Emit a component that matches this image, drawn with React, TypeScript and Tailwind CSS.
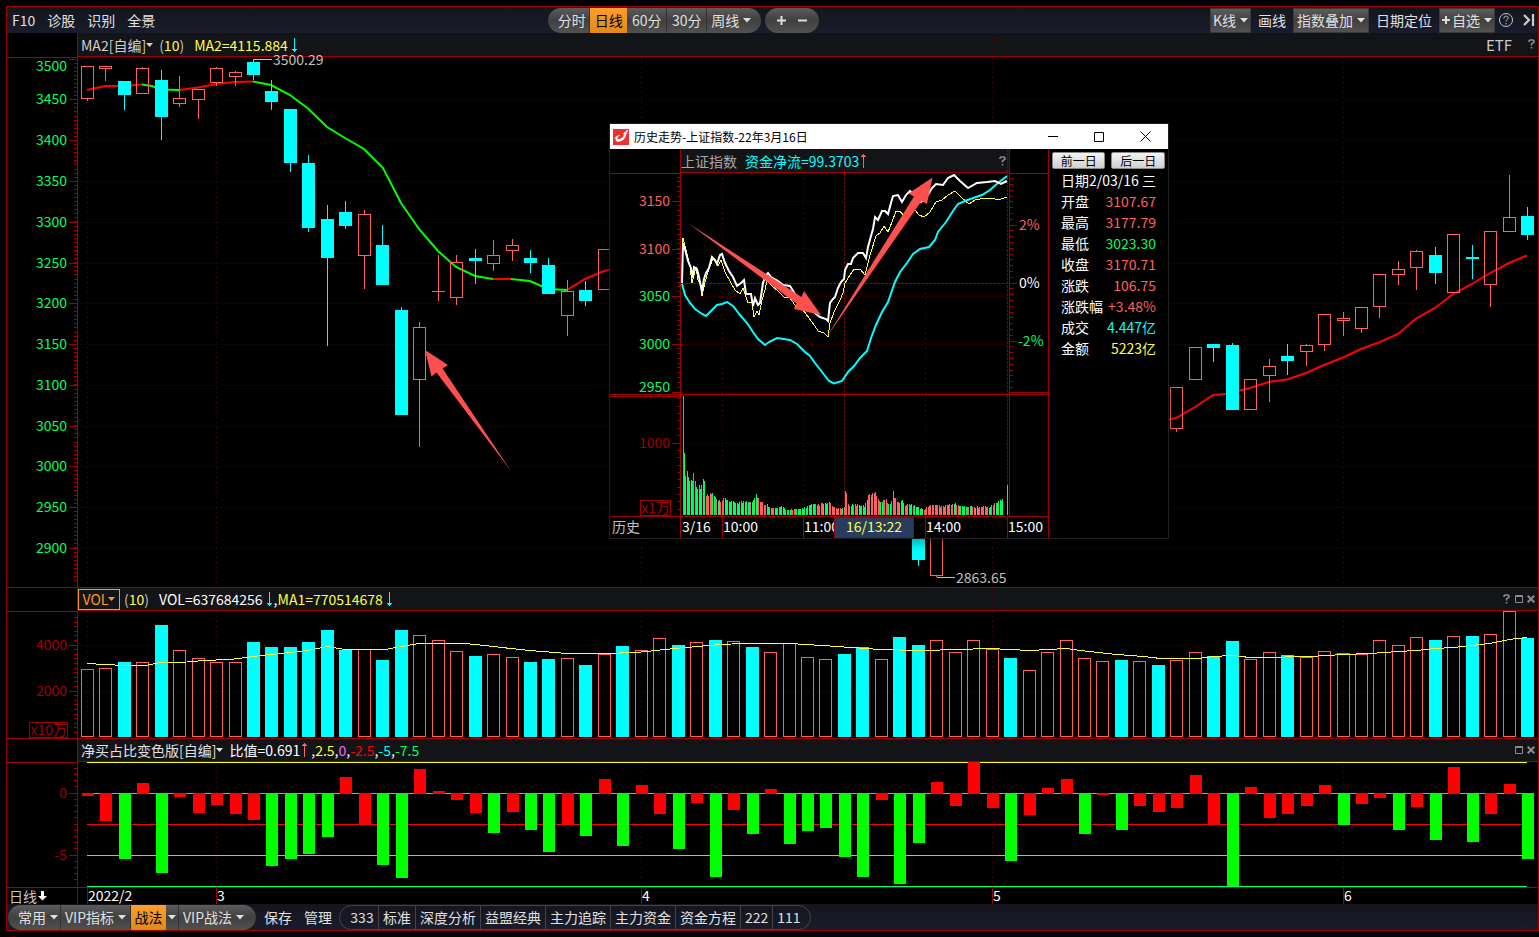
import React from 'react';

const RED = '#a00000';
const UP = '#ff6060';
const DOWN = '#00ffff';
const FONT = `font-['Noto_Sans_CJK_SC','Noto_Sans',sans-serif]`;

// plot area shared by all stacked panels
const PLOT_X = 78;
const PLOT_W = 1460;
const MONTHS = [
  { x: 87, label: '2022/2' },
  { x: 216, label: '3' },
  { x: 641, label: '4' },
  { x: 992, label: '5' },
  { x: 1343, label: '6' },
];

const barX = (i: number) => Math.floor(87.3 + i * 18.4667);
const pct = (x: number) => `${((x - PLOT_X) / PLOT_W) * 100}%`;

// index, kind, high, body top, body bottom, low
type Candle = [number, 'u' | 'd', number, number, number, number];
const CANDLES: Candle[] = [
  [0, 'u', 66, 66, 98, 101], [1, 'u', 66, 66, 68, 81], [2, 'd', 81, 81, 95, 110], [3, 'u', 67, 68, 93, 93],
  [4, 'd', 70, 80, 117, 140], [5, 'u', 76, 98, 103, 107], [6, 'u', 89, 89, 99, 119], [7, 'u', 67, 68, 82, 86],
  [8, 'u', 71, 72, 76, 86], [9, 'd', 59, 62, 75, 80], [10, 'd', 80, 91, 102, 110], [11, 'd', 109, 109, 163, 172],
  [12, 'd', 155, 163, 228, 232], [13, 'd', 205, 219, 258, 346], [14, 'd', 201, 212, 226, 229], [15, 'u', 210, 214, 255, 289],
  [16, 'd', 225, 245, 285, 285], [17, 'd', 307, 310, 415, 415], [18, 'u', 322, 327, 379, 447], [19, 'u', 255, 291, 291, 301],
  [20, 'u', 255, 262, 297, 305], [21, 'd', 249, 258, 261, 284], [22, 'u', 240, 255, 263, 271], [23, 'u', 239, 245, 250, 261],
  [24, 'd', 250, 258, 263, 273], [25, 'd', 258, 265, 294, 294], [26, 'u', 280, 291, 315, 336], [27, 'd', 281, 290, 301, 306],
  [28, 'u', 249, 249, 289, 289], [45, 'd', 500, 500, 560, 566], [46, 'u', 510, 510, 575, 577],
  [59, 'u', 387, 387, 428, 432], [60, 'u', 347, 347, 379, 379], [61, 'd', 344, 344, 348, 362], [62, 'd', 343, 345, 410, 410],
  [63, 'u', 379, 379, 409, 409], [64, 'u', 359, 366, 375, 402], [65, 'd', 344, 356, 361, 375], [66, 'u', 344, 345, 351, 366],
  [67, 'u', 314, 314, 344, 351], [68, 'u', 312, 318, 320, 336], [69, 'u', 307, 307, 328, 333], [70, 'u', 274, 274, 306, 318],
  [71, 'u', 261, 269, 274, 285], [72, 'u', 250, 251, 267, 290], [73, 'd', 247, 255, 273, 284], [74, 'u', 234, 234, 292, 292],
  [75, 'd', 245, 257, 259, 279], [76, 'u', 231, 231, 284, 307], [77, 'u', 175, 217, 231, 231], [78, 'd', 207, 216, 235, 240],
];

const MA_LINES = [
  { color: '#ff0000', points: '87,90 105,86 124,86 142,84.5' },
  { color: '#00ff00', points: '142,84.5 152,86 161,89.5 179,90' },
  { color: '#ff0000', points: '179,90 198,87.5 216,84 235,82 253,81.5' },
  { color: '#00ff00', points: '253,81.5 271,85 290,95 308,108.5 327,127 345,138 364,149 383,168 401,203 419,229 438,251 456,267 475,276 493,279' },
  { color: '#ff0000', points: '493,279 511,279' },
  { color: '#00ff00', points: '511,279 530,281 548,289 567,290' },
  { color: '#ff0000', points: '567,290 585,279 604,271 610,270' },
  { color: '#ff0000', points: '1166,420 1176,418 1195,407 1213,395 1226,394 1250,388 1269,382 1287,379.5 1306,373 1324,365 1343,357.5 1361,349 1380,342 1398,334 1416,318.5 1435,308 1453,294 1472,284 1490,273 1509,263 1527,255.5' },
];

const VOLUMES =
  'u669 u668 d662 u662 d625 u650 u658 u662 u662 d642 d647 d647 d642 d630 d650 u649 d660 d630 u635 u640 u651 d656 u654 u657 ' +
  'd662 d659 u658 d665 u654 d646 u650 u638 d645 u642 d640 u641 d647 u652 u643 u657 u659 d654 d647 u659 d637 d645 u640 u652 ' +
  'u640 u649 d658 u670 u652 u640 u658 u661 d660 u661 d665 u660 u652 d656 d641 u659 u652 d655 u657 u651 u653 u654 u640 u645 ' +
  'u637 d640 u636 d636 u634 u611 d638';

const VOL_MA =
  '87,663.5 105,664.5 124,665.5 145,665.5 161,662.5 187,662 198,661 216,660 234,659 253,656.5 271,654.5 290,652.5 308,650.5 327,646.5 345,649.5 ' +
  '385,649.5 401,646.5 419,643.5 465,643.5 475,644.5 493,646.5 511,648.5 530,650.5 567,653.5 600,654 641,652 680,648 715,645 740,643.5 790,643.5 ' +
  '830,646 880,649.5 900,650 940,650 990,648.5 1030,650.5 1066,648.5 1080,650.5 1098,652.5 1117,654.5 1143,656.5 1161,658.5 1198,658.5 ' +
  '1213,656.5 1232,655.5 1250,657.5 1280,657.5 1290,656.5 1310,656.5 1343,654.5 1370,653.5 1398,651.5 1416,650.5 1435,648.5 1453,647.5 ' +
  '1472,645.5 1490,643.5 1509,639.5 1527,637.5';

const RATIOS =
  'r796 r821 g859 r783 g873 r797 r813 r805 r814 r820 g866 g859 g854 g837 r777 r824 g865 g878 r769 r791 r800 r813 g833 r812 ' +
  'g830 g852 r824 g836 r779 g846 r785 r814 g849 r803 g877 r810 g834 r789 g844 g831 g828 g857 g877 r800 g884 g843 r782 r806 ' +
  'r762 r808 g861 r815 r788 r779 g834 r795 g830 r806 r812 r808 r775 r824 g886 r787 r818 r814 r806 r785 g825 r804 r798 g830 ' +
  'r807 g840 r767 g842 r814 r784 g859';

const parse = (s: string) => s.split(' ').map((v) => ({ kind: v[0], y: Number(v.slice(1)) }));

const WHITE_LINE =
  '682,283 683,243 685,249 688,261 691,268 693,278 694,267 697,269 699,277 702,292 704,279 706,273 709,268 712,257 715,260 717,264 720,255 722,254 725,263 729,271 733,277 737,286 741,283 744,280 746,294 751,294 753,306 755,298 758,305 760,303 763,283 766,275 768,273 771,277 778,281 783,285 790,286 795,294 800,299 810,308 816,314 820,317 826,319 828,321 830,303 833,299 835,297 838,288 841,282 844,279 845,270 848,264 851,264 853,258 858,253 863,253 866,258 868,247 871,236 873,229 875,217 878,220 882,211 885,211 888,214 891,203 893,196 898,195 902,202 906,195 910,191 916,197 921,202 928,195 932,188 936,184 943,185 948,178 954,175 960,181 968,188 977,183 987,182 995,181 1001,184 1007,181';
const YELLOW_LINE =
  '682,283 683,238 686,250 690,266 692,283 696,267 698,280 701,285 702,296 705,282 708,272 713,258 718,266 721,260 725,272 730,281 735,290 740,294 743,288 748,303 752,302 754,317 757,311 759,315 762,300 765,290 767,281 772,286 778,291 784,297 790,298 797,308 803,310 809,318 815,326 818,331 824,333 828,337 830,323 834,312 840,300 843,293 845,283 850,275 854,269 860,269 865,275 870,255 876,236 880,233 884,226 888,232 892,222 896,211 900,211 906,219 910,208 915,210 919,215 924,217 930,212 936,202 942,200 948,195 955,191 962,198 969,204 975,200 985,198 995,199 1001,199 1007,197';
const CYAN_LINE =
  '682,284 685,295 690,303 695,309 702,314 706,316 712,310 717,305 722,304 727,302 733,306 740,315 747,323 753,332 758,339 765,345 769,342 777,338 790,340 797,344 805,352 810,356 815,363 822,372 829,381 834,383.5 842,381 848,372 854,366 860,358 867,351 871,338 876,325 882,312 888,302 895,282 900,272 907,263 913,254 920,249 929,247 935,240 938,232 946,222 953,211 958,204 965,201 973,198 982,195 990,190 998,183 1007,176';

// minute volume: envelope points (x, height) with the share of rising bars
const VOL_ENV: [number, number, number][] = [
  [684, 55, 0], [685, 43, 0], [687, 42, 0.2], [690, 30, 0.2], [693, 39, 0.5], [698, 25, 0.2], [703, 36, 0.4], [706, 19, 0.9], [712, 21, 0.7],
  [716, 15, 0.2], [720, 12, 0.7], [725, 16, 0.1], [731, 12, 0.2], [745, 13, 0.4], [752, 14, 0.2], [756, 20, 0.8], [760, 12, 1],
  [767, 10, 0.8], [773, 6, 0.3], [782, 8, 0.3], [786, 5, 0.5], [800, 6, 0.3], [812, 10, 0.4], [820, 10, 0.4], [829, 12, 0.8],
  [835, 6, 0.8], [844, 7, 1], [845, 25, 1], [848, 10, 0.8], [858, 10, 0.3], [864, 8, 0.2], [868, 18, 0.9], [875, 24, 0.9], [878, 14, 0.8],
  [885, 15, 0.8], [890, 10, 0.4], [893, 21, 0.9], [897, 12, 0.6], [901, 14, 0.3], [905, 10, 0.6], [914, 10, 0.2], [920, 6, 0.2],
  [925, 6, 1], [934, 12, 0.9], [940, 8, 1], [953, 11, 0.5], [965, 8, 0.2], [980, 8, 0.8], [990, 8, 0.7], [996, 12, 0.5], [1003, 15, 0.8],
];

const minuteBars = () => {
  const bars: { x: number; h: number; up: boolean }[] = [{ x: 683, h: 119, up: true }];
  for (let i = 1; i < 237; i++) {
    const x = Math.floor(683 + i * 1.355);
    if (x > 1003) break;
    let k = 0;
    while (k < VOL_ENV.length - 2 && VOL_ENV[k + 1][0] <= x) k++;
    const [x0, h0, p] = VOL_ENV[k];
    const [x1, h1] = VOL_ENV[k + 1];
    const h = h0 + ((h1 - h0) * Math.max(0, x - x0)) / (x1 - x0);
    const noise = Math.abs(Math.sin(i * 12.9898) * 43758.5453) % 1;
    const tone = Math.abs(Math.sin(Math.floor(i / 2) * 78.233) * 12543.123) % 1;
    bars.push({ x, h: Math.round(h * (0.9 + noise * 0.25)), up: tone < p });
  }
  bars.push({ x: 1007, h: 30, up: false });
  return bars;
};

interface Tick {
  y: number;
  label: string;
  color?: string;
  labelY?: number;
}

interface AxisProps {
  top: number;
  height: number;
  ticks: Tick[];
  step: number;
  from: number;
  to: number;
  rule: number;
  unit?: { text: string; x: number; y: number };
}

const Axis = ({ top, height, ticks, step, from, to, rule, unit }: AxisProps) => {
  const minors: number[] = [];
  const base = ticks[0].y;
  for (let y = base + Math.ceil((from - base) / step) * step; y <= to; y += step) minors.push(Math.floor(y) + 0.5);
  return (
    <div className="w-[71px] shrink-0 border-r border-[#a00000]">
      <svg width="70" height={height} viewBox={`0 ${top} 70 ${height}`} className="block overflow-visible" fontSize="14">
        <line x1="0" x2="70" y1={rule + 0.5} y2={rule + 0.5} stroke={RED} />
        {minors.map((y) => (
          <line key={y} x1="67" x2="70" y1={y} y2={y} stroke={RED} />
        ))}
        {ticks.map((t) => (
          <g key={t.y}>
            <line x1="62" x2="70" y1={t.y + 0.5} y2={t.y + 0.5} stroke={RED} />
            <text x="60" y={(t.labelY ?? t.y) + 5} textAnchor="end" fill={t.color ?? RED}>
              {t.label}
            </text>
          </g>
        ))}
        {unit && (
          <g>
            <rect x={unit.x + 0.5} y={unit.y + 0.5} width={60 - unit.x} height="15" fill="none" stroke={RED} />
            <text x="60" y={unit.y + 13} textAnchor="end" fill={RED}>
              {unit.text}
            </text>
          </g>
        )}
      </svg>
    </div>
  );
};

const MonthLines = ({ top, height }: { top: number; height: number }) => (
  <g stroke="#600000" strokeDasharray="1 4">
    {MONTHS.map((m) => (
      <line key={m.x} x1={m.x + 0.5} x2={m.x + 0.5} y1={top} y2={top + height} />
    ))}
  </g>
);

const Plot = ({ top, height, rows, children }: { top: number; height: number; rows: number[]; children: React.ReactNode }) => (
  <svg
    className="block w-full"
    height={height}
    viewBox={`${PLOT_X} ${top} ${PLOT_W} ${height}`}
    preserveAspectRatio="none"
    shapeRendering="crispEdges"
  >
    <g stroke="#600000" strokeDasharray="1 3">
      {rows.map((y) => (
        <line key={y} x1="81" x2="1538" y1={y + 0.5} y2={y + 0.5} />
      ))}
    </g>
    <MonthLines top={top} height={height} />
    {children}
  </svg>
);

const PanelHeader = ({ className, children }: { className: string; children: React.ReactNode }) => (
  <div className={`relative flex items-center border-b border-[#a00000] bg-[#131418] ${className}`}>
    <svg className="absolute inset-0 h-full w-full" viewBox={`${PLOT_X} 0 ${PLOT_W} 23`} preserveAspectRatio="none" shapeRendering="crispEdges">
      <MonthLines top={0} height={23} />
    </svg>
    {children}
  </div>
);

const Caret = ({ className = 'text-[#e0e0e0]' }: { className?: string }) => (
  <svg width="8" height="5" viewBox="0 0 8 5" className={`shrink-0 ${className}`}>
    <path d="M0 0h8L4 4.5z" fill="currentColor" />
  </svg>
);

const SmallCaret = () => (
  <svg width="7" height="4" viewBox="0 0 7 4" className="shrink-0">
    <path d="M0 0h7L3.5 4z" fill="currentColor" />
  </svg>
);

const Trend = ({ up = false }: { up?: boolean }) => (
  <svg width="5" height="14" viewBox="0 0 5 14" shapeRendering="crispEdges" className={`shrink-0 ${up ? 'rotate-180 text-[#ff6060]' : 'text-[#00ffff]'}`}>
    <path d="M2 0h1v14H2zM0 11h5v1H0zM1 12h3v1H1z" fill="currentColor" />
  </svg>
);

const HelpMark = () => (
  <svg width="8" height="10" viewBox="0 0 8 10">
    <path d="M1 3V2l1-1h3l1 1v1L3.5 5v1.500M3.500 8v1.500" fill="none" stroke="#8c8c8c" strokeWidth="1.600" />
  </svg>
);

const MaxMark = () => (
  <svg width="8" height="8" viewBox="0 0 8 8">
    <path d="M.5.5h7v7h-7zM0 1.500h8" fill="none" stroke="#8c8c8c" />
  </svg>
);

const CloseMark = () => (
  <svg width="8" height="8" viewBox="0 0 8 8">
    <path d="M.7.7l6.600 6.600M7.300.7L.7 7.300" stroke="#8c8c8c" strokeWidth="2" />
  </svg>
);

const METAL = 'bg-gradient-to-b from-[#5c5c5c] via-[#404040] to-[#525252]';
const METAL_BTN = `flex h-[25px] items-center border border-[#3a3a3a] ${METAL}`;

const TopBar = () => (
  <header className="grid h-[26px] grid-cols-[541fr_989fr] items-center bg-gradient-to-b from-[#14151d] to-[#191c2c]">
    <nav className="flex gap-3 pl-[5px]">
      <button>F10</button>
      <button>诊股</button>
      <button>识别</button>
      <button>全景</button>
    </nav>
    <div className="flex items-center justify-between">
      <div className="flex gap-1">
        <div className={`flex h-[25px] overflow-hidden rounded-full ${METAL}`}>
          <button className="w-[42px] border-r border-[#333] pl-1.5">分时</button>
          <button className="w-[37px] bg-gradient-to-b from-[#ff9d2e] to-[#e08a14] text-black">日线</button>
          <button className="w-10 border-r border-[#333]">60分</button>
          <button className="w-10 border-r border-[#333]">30分</button>
          <button className="flex w-[54px] items-center gap-1 pl-1">
            周线
            <Caret />
          </button>
        </div>
        <div className={`flex h-[25px] items-center justify-center gap-3 rounded-full px-3 ${METAL}`}>
          <button aria-label="放大">
            <svg width="9" height="9" viewBox="0 0 9 9"><path d="M4.500 0v9M0 4.500h9" stroke="#ddd" strokeWidth="2" /></svg>
          </button>
          <button aria-label="缩小">
            <svg width="9" height="9" viewBox="0 0 9 9"><path d="M0 4.500h9" stroke="#ddd" strokeWidth="2" /></svg>
          </button>
        </div>
      </div>
      <div className="flex items-center gap-[7px]">
        <button className={`gap-1 px-0.5 ${METAL_BTN}`}>
          K线
          <Caret />
        </button>
        <button>画线</button>
        <button className={`gap-1 px-[3px] ${METAL_BTN}`}>
          指数叠加
          <Caret />
        </button>
        <button>日期定位</button>
        <button className={`gap-1 px-0.5 ${METAL_BTN}`}>
          <span className="flex items-center gap-0.5">
            <svg width="8" height="8" viewBox="0 0 8 8"><path d="M4 0v8M0 4h8" stroke="#ddd" strokeWidth="2" /></svg>
            自选
          </span>
          <Caret />
        </button>
        <div className="flex items-center gap-2 pr-0.5">
          <button aria-label="帮助" className="-ml-1">
            <svg width="16" height="16" viewBox="0 0 16 16" fill="none" stroke="#c8c8c8">
              <circle cx="8" cy="8" r="6.500" />
              <path d="M5.800 6.500c0-3 4.400-3 4.400-.4 0 1.600-2.200 1.600-2.200 3.400M8 11v1.300" />
            </svg>
          </button>
          <button aria-label="收起">
            <svg width="14" height="12" viewBox="0 0 14 12" fill="none" stroke="#ccc" strokeWidth="2.200">
              <path d="M2 1l5 5-5 5M11 0v12" />
            </svg>
          </button>
        </div>
      </div>
    </div>
  </header>
);

const PRICE_ROWS = [59, 99, 140, 181, 222, 263, 303, 344, 385, 426, 466, 507, 548];

const PricePanel = () => (
  <section className="flex border-b border-[#a00000]">
    <Axis
      top={33}
      height={554}
      rule={57}
      step={4.075}
      from={60}
      to={584}
      ticks={PRICE_ROWS.map((y, i) => ({ y, label: String(3500 - i * 50), color: '#00ff60', labelY: i === 0 ? 66 : y }))}
    />
    <div className="min-w-0 flex-1">
      <PanelHeader className="h-6 justify-between pl-[3px]">
        <div className="relative flex items-center text-[#ffff40]">
          <button className="flex items-center text-[#d0d0d0]">
            MA2[自编]
            <SmallCaret />
          </button>
          <span className="ml-1.5"><span className="text-[#c0c0c0]">(</span>10<span className="text-[#c0c0c0]">)</span></span>
          <span className="mr-1 ml-2.5">MA2=4115.884</span>
          <Trend />
        </div>
        <div className="relative flex items-center gap-4 pr-0.5 text-[15px] text-[#c8c8c8]">
          ETF
          <HelpMark />
        </div>
      </PanelHeader>
      <div className="relative">
        <Plot top={57} height={530} rows={PRICE_ROWS}>
          {MA_LINES.map((l) => (
            <polyline key={l.points} points={l.points} fill="none" stroke={l.color} strokeWidth="2" shapeRendering="auto" />
          ))}
          {CANDLES.map(([i, kind, high, top, bottom, low]) => {
            const x = barX(i);
            return kind === 'd' ? (
              <g key={i} fill={DOWN}>
                <rect x={x} y={high} width="1" height={low - high} />
                <rect x={x - 6} y={top} width="13" height={bottom - top} />
              </g>
            ) : top === bottom ? (
              <g key={i} fill={UP}>
                <rect x={x} y={high} width="1" height={low - high} />
                <rect x={x - 6} y={top} width="13" height="1" />
              </g>
            ) : (
              <g key={i} fill={UP}>
                <rect x={x} y={high} width="1" height={top - high} />
                <rect x={x} y={bottom} width="1" height={low - bottom} />
                <rect x={x - 5.5} y={top + 0.5} width="12" height={bottom - top} fill="none" stroke={UP} />
              </g>
            );
          })}
          <path d="M253.500 59.500H272M936.500 577.500H955" stroke="#c0c0c0" />
          <path d="M425 350L448 365 442.500 368.500 511 471 436.500 372.500 431.500 376.500z" fill="#ff5050" shapeRendering="auto" />
        </Plot>
        <span className="absolute -top-2 leading-5 text-[#c0c0c0]" style={{ left: pct(273) }}>3500.29</span>
        <span className="absolute bottom-0 leading-5 text-[#c0c0c0]" style={{ left: pct(956) }}>2863.65</span>
      </div>
    </div>
  </section>
);

const VolumePanel = () => (
  <section className="flex border-b border-[#a00000]">
    <Axis
      top={588}
      height={150}
      rule={611}
      step={4.6}
      from={613}
      to={735}
      ticks={[{ y: 645, label: '4000' }, { y: 691, label: '2000' }]}
      unit={{ text: 'x10万', x: 22, y: 722 }}
    />
    <div className="min-w-0 flex-1">
      <PanelHeader className="h-[23px] justify-between">
        <div className="relative flex items-center text-[#ffff40]">
          <button className="flex h-[21px] w-[42px] items-center justify-center border border-[#ff9a20] text-[#ff9a20]">
            VOL
            <SmallCaret />
          </button>
          <span className="ml-1"><span className="text-[#c0c0c0]">(</span>10<span className="text-[#c0c0c0]">)</span></span>
          <span className="mr-1 ml-2.5 text-white">VOL=637684256</span>
          <Trend />
          <span className="ml-0.5 text-white">,</span>
          <span className="mr-1">MA1=770514678</span>
          <Trend />
        </div>
        <div className="relative flex items-center gap-1 pr-[3px]">
          <HelpMark />
          <MaxMark />
          <CloseMark />
        </div>
      </PanelHeader>
      <Plot top={611} height={127} rows={[645, 691]}>
        {parse(VOLUMES).map(({ kind, y }, i) =>
          kind === 'd' ? (
            <rect key={i} x={barX(i) - 6} y={y} width="13" height={737 - y} fill={DOWN} />
          ) : (
            <rect key={i} x={barX(i) - 5.5} y={y + 0.5} width="12" height={736 - y} fill="none" stroke={UP} />
          )
        )}
        <polyline points={VOL_MA} fill="none" stroke="#ffff40" />
      </Plot>
    </div>
  </section>
);

const RatioPanel = () => (
  <section className="flex border-b border-[#a00000]">
    <Axis top={739} height={148} rule={762} step={6.2} from={764} to={884} ticks={[{ y: 793, label: '0' }, { y: 855, label: '-5' }]} />
    <div className="min-w-0 flex-1">
      <PanelHeader className="h-[23px] justify-between pl-[3px]">
        <div className="relative flex items-center text-white">
          <button className="flex items-center text-[#e0e0e0]">
            净买占比变色版[自编]
            <SmallCaret />
          </button>
          <span className="mr-0.5 ml-1.5">比值=0.691</span>
          <Trend up />
          <span className="ml-1">
            ,<span className="text-[#ffff40]">2.5</span>,<span className="text-[#ff60ff]">0</span>,
            <span className="text-[#ff0000]">-2.5</span>,<span className="text-[#00ffff]">-5</span>,
            <span className="text-[#00ff60]">-7.5</span>
          </span>
        </div>
        <div className="relative flex items-center gap-1 pr-[3px]">
          <MaxMark />
          <CloseMark />
        </div>
      </PanelHeader>
      <Plot top={762} height={125} rows={[793, 855]}>
        <line x1="87" x2="1527" y1="762.5" y2="762.5" stroke="#ffff00" />
        <line x1="87" x2="1527" y1="793.5" y2="793.5" stroke="#ff60ff" />
        <line x1="87" x2="1527" y1="824.5" y2="824.5" stroke="#ff0000" />
        <line x1="87" x2="1527" y1="855.5" y2="855.5" stroke="#00ffff" />
        <line x1="87" x2="1527" y1="886.5" y2="886.5" stroke="#00ff60" />
        {parse(RATIOS).map(({ kind, y }, i) => (
          <rect
            key={i}
            x={barX(i) - 5}
            y={Math.min(y, 793)}
            width="12"
            height={y < 793 ? 794 - y : y - 793}
            fill={kind === 'g' ? '#00ff00' : '#ff0000'}
          />
        ))}
      </Plot>
    </div>
  </section>
);

const DateRuler = () => (
  <div className="flex h-4 leading-4">
    <button className="flex w-[71px] shrink-0 items-center gap-px border-r border-[#a00000] pl-0.5 text-[#c8c8c8]">
      日线
      <svg width="9" height="10" viewBox="0 0 9 10"><path d="M3 0h3v5h3L4.500 9.500 0 5h3z" fill="#fff" /></svg>
    </button>
    <div className="relative flex-1 text-white">
      {MONTHS.map((m) => (
        <span key={m.x} className="absolute h-4 border-l border-[#a00000] leading-[14px]" style={{ left: pct(m.x) }}>
          {m.label}
        </span>
      ))}
    </div>
  </div>
);

const SCHEMES = ['标准', '深度分析', '益盟经典', '主力追踪', '主力资金', '资金方程', '222'];

const BottomBar = () => (
  <footer className="flex h-[26px] items-center bg-gradient-to-b from-[#14151d] to-[#191c2c] pl-px">
    <div className={`flex h-[25px] overflow-hidden rounded-full ${METAL}`}>
      <button className="flex w-[53px] items-center gap-1 border-r border-[#333] pl-2.5">
        常用
        <Caret />
      </button>
      <button className="flex w-[70px] items-center gap-1 border-r border-[#333] pl-1">
        VIP指标
        <Caret />
      </button>
      <button className="w-[35px] bg-gradient-to-b from-[#ff9d2e] to-[#e08a14] text-black">战法</button>
      <button aria-label="战法菜单" className="flex w-[13px] items-center justify-center border-r border-[#333]">
        <Caret />
      </button>
      <button className="flex w-[77px] items-center gap-1 pl-1">
        VIP战法
        <Caret />
      </button>
    </div>
    <div className="flex gap-3 pr-[7px] pl-2">
      <button>保存</button>
      <button>管理</button>
    </div>
    <div className="flex h-[25px] items-center rounded-full border border-[#444]">
      <button className="h-full w-[38px] pl-1.5">333</button>
      {SCHEMES.map((s) => (
        <button key={s} className="h-full border-l border-[#444] px-1">
          {s}
        </button>
      ))}
      <button className="h-full w-[38px] border-l border-[#444] pr-1.5">111</button>
    </div>
  </footer>
);

const QUOTE = [
  { name: '日期', value: '2/03/16 三', color: 'text-white' },
  { name: '开盘', value: '3107.67', color: 'text-[#ff6060]' },
  { name: '最高', value: '3177.79', color: 'text-[#ff6060]' },
  { name: '最低', value: '3023.30', color: 'text-[#00ff60]' },
  { name: '收盘', value: '3170.71', color: 'text-[#ff6060]' },
  { name: '涨跌', value: '106.75', color: 'text-[#ff6060]' },
  { name: '涨跌幅', value: '+3.48%', color: 'text-[#ff6060]' },
  { name: '成交', value: '4.447亿', color: 'text-[#00ffff]' },
  { name: '金额', value: '5223亿', color: 'text-[#ffff40]' },
];

// dotted hour lines plus the dashed cursor and close lines
const HourLines = ({ y1, y2 }: { y1: number; y2: number }) => (
  <>
    <g stroke="#600000" strokeDasharray="1 4">
      {[722, 803, 925].map((x) => (
        <line key={x} x1={x + 0.5} x2={x + 0.5} y1={y1} y2={y2} />
      ))}
    </g>
    <g stroke="#800000" strokeDasharray="3 1">
      <line x1="844.5" x2="844.5" y1={y1} y2={y2} />
      <line x1="1007.5" x2="1007.5" y1={y1} y2={y2} />
    </g>
  </>
);

const HistoryWindow = () => {
  const pctTicks = Array.from({ length: 38 }, (_, i) => Math.floor(283 + (i - 18) * 5.8)).filter((y) => y > 175 && y < 391);
  return (
    <div role="dialog" aria-label="历史走势" className="absolute top-[123px] left-[609px] w-[560px] border border-[#202020] bg-black shadow-[0_4px_10px_rgba(0,0,0,0.35)]">
      <div className="flex h-[25px] items-center bg-white pl-[3px] text-xs leading-none text-black">
        <svg width="16" height="16" viewBox="0 0 16 16">
          <rect width="16" height="16" fill="#f03030" />
          <path d="M1 10C2 7.500 4.500 6 7.500 6.200 5.500 7 4 8.500 4.500 9.800 8 10.500 10.500 8 11.200 5L9.500 5.200 12.500 2.500 15 4.800 13.500 4.600C13 9 9.500 13 5 12.800 2.800 12.600 2 11 3 9.300 2.300 9.200 1.600 9.400 1 10z" fill="#fff" />
          <circle cx="14" cy="2" r="1" fill="#fff" />
        </svg>
        <h2 className="ml-[5px] flex-1">历史走势-上证指数-22年3月16日</h2>
        <button aria-label="最小化" className="flex w-[46px] justify-center">
          <svg width="10" height="11" viewBox="0 0 10 11"><path d="M0 5.500h10" stroke="#000" /></svg>
        </button>
        <button aria-label="最大化" className="flex w-[46px] justify-center">
          <svg width="10" height="10" viewBox="0 0 10 10"><path d="M.5.5h9v9h-9z" fill="none" stroke="#000" /></svg>
        </button>
        <button aria-label="关闭" className="flex w-[46px] justify-center">
          <svg width="11" height="11" viewBox="0 0 11 11"><path d="M.5.5l10 10M10.500.5l-10 10" stroke="#000" /></svg>
        </button>
      </div>
      <div className="flex">
        <div className="w-[439px] shrink-0 border-r border-[#a00000]">
          <div className="flex border-b border-[#a00000]">
            <Axis
              top={149}
              height={245}
              rule={173}
              step={4.77}
              from={176}
              to={391}
              ticks={[
                { y: 201, label: '3150', color: UP },
                { y: 249, label: '3100', color: UP },
                { y: 296, label: '3050', color: '#00ff60' },
                { y: 344, label: '3000', color: '#00ff60' },
                { y: 392, label: '2950', color: '#00ff60', labelY: 387 },
              ]}
            />
            <div className="w-[328px]">
              <div className="relative flex h-6 items-center border-b border-[#a00000] bg-[#131418]">
                <svg className="absolute inset-0" width="328" height="23" viewBox="681 0 328 23" shapeRendering="crispEdges">
                  <HourLines y1={0} y2={23} />
                </svg>
                <span className="relative text-[#a8a8a8]">上证指数</span>
                <span className="relative ml-2 flex flex-1 items-center gap-0.5 text-[#00ffff]">
                  资金净流=99.3703
                  <Trend up />
                </span>
                <span className="relative pr-0.5"><HelpMark /></span>
              </div>
              <svg width="328" height="221" viewBox="681 173 328 221" className="block" shapeRendering="crispEdges">
                <g stroke="#600000" strokeDasharray="1 3">
                  {[201, 249, 296, 344, 392].map((y) => (
                    <line key={y} x1="682" x2="1009" y1={y + 0.5} y2={y + 0.5} />
                  ))}
                </g>
                <line x1="681" x2="1009" y1="283.5" y2="283.5" stroke="#a00000" strokeDasharray="3 1" />
                <HourLines y1={173} y2={394} />
                <polyline points={YELLOW_LINE} fill="none" stroke="#ffff40" />
                <polyline points={CYAN_LINE} fill="none" stroke="#00ffff" strokeWidth="2" shapeRendering="auto" />
                <polyline points={WHITE_LINE} fill="none" stroke="#fff" strokeWidth="2" shapeRendering="auto" />
                <g fill="#ff5050" shapeRendering="auto">
                  <path d="M688 223L801.500 297 804 291 821 315 794 309 796.500 303.500z" />
                  <path d="M826 338L914 196.500 908.500 193.500 932.500 177.500 927 204 921.500 201z" />
                </g>
              </svg>
            </div>
            <svg width="39" height="245" viewBox="1009 149 39 245" className="block" fontSize="14">
              <path d="M1009.500 149V394M1009 173.500H1048M1009 392.500H1048" stroke={RED} />
              {pctTicks.map((y) => (
                <line key={y} x1="1009" x2="1013" y1={y + 0.5} y2={y + 0.5} stroke={RED} />
              ))}
              {[
                { y: 225, label: '2%', color: UP, x: 1019 },
                { y: 283, label: '0%', color: '#fff', x: 1019 },
                { y: 341, label: '-2%', color: '#00ff60', x: 1018 },
              ].map((t) => (
                <g key={t.y}>
                  <line x1="1009" x2="1017" y1={t.y + 0.5} y2={t.y + 0.5} stroke={RED} />
                  <text x={t.x} y={t.y + 5} fill={t.color}>
                    {t.label}
                  </text>
                </g>
              ))}
            </svg>
          </div>
          <div className="flex border-b border-[#a00000]">
            <Axis top={395} height={121} rule={396} step={7.35} from={398} to={514} ticks={[{ y: 443, label: '1000' }]} unit={{ text: 'x1万', x: 30, y: 500 }} />
            <svg width="329" height="121" viewBox="681 395 329 121" className="block" shapeRendering="crispEdges">
              <line x1="682" x2="1009" y1="443.5" y2="443.5" stroke="#600000" strokeDasharray="1 3" />
              <HourLines y1={395} y2={516} />
              <line x1="1009.5" x2="1009.5" y1="395" y2="516" stroke={RED} />
              {minuteBars().map((b) => (
                <rect key={b.x} x={b.x} y={515 - b.h} width="1" height={b.h} fill={b.up ? UP : '#00ff60'} />
              ))}
            </svg>
          </div>
          <div className="flex h-[21px] leading-[18px] text-white">
            <span className="w-[71px] border-r border-[#a00000] pl-0.5 text-[#c0c0c0]">历史</span>
            <span className="w-[41px] pl-px">3/16</span>
            <span className="w-[81px] border-l border-[#a00000]">10:00</span>
            <span className="w-[31px] border-l border-[#a00000]">11:00</span>
            <span className="relative w-20 border border-[#a00000] bg-[#283c60] text-center leading-[17px] text-[#ffff40]">16/13:22</span>
            <span className="ml-[11px] w-[82px] border-l border-[#a00000]">14:00</span>
            <span className="border-l border-[#a00000]">15:00</span>
          </div>
        </div>
        <div className="flex-1">
          <div className="flex gap-1.5 pt-[3px] pr-1 pb-px pl-[3px] text-xs text-black">
            <button className="h-[17px] flex-1 rounded-[2px] border border-[#888] bg-gradient-to-b from-[#f4f4f4] to-[#cfcfcf] leading-[14px]">前一日</button>
            <button className="h-[17px] flex-1 rounded-[2px] border border-[#888] bg-gradient-to-b from-[#f4f4f4] to-[#cfcfcf] leading-[14px]">后一日</button>
          </div>
          <dl className="pr-[13px] pl-3 leading-[21px]">
            {QUOTE.map((q) => (
              <div key={q.name} className="flex h-[21px] justify-between whitespace-nowrap">
                <dt className="text-white">{q.name}</dt>
                <dd className={q.color}>{q.value}</dd>
              </div>
            ))}
          </dl>
        </div>
      </div>
    </div>
  );
};

export default function App() {
  return (
    <div className={`relative min-h-screen bg-black py-1.5 pl-1.5 text-sm text-[#e0e0e0] ${FONT}`}>
      <main className="border border-[#a00000]">
        <TopBar />
        <PricePanel />
        <VolumePanel />
        <RatioPanel />
        <DateRuler />
        <BottomBar />
      </main>
      <HistoryWindow />
    </div>
  );
}
